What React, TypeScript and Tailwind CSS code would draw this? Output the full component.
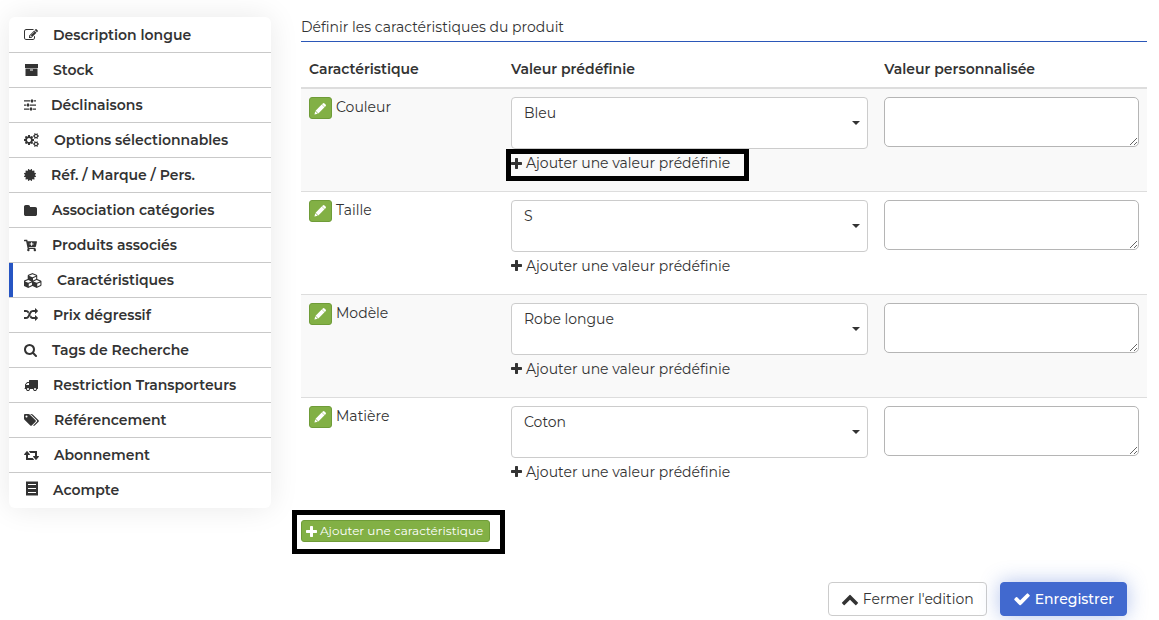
import { useState } from 'react';
import type { ReactNode } from 'react';
import { FaCartPlus, FaCertificate } from 'react-icons/fa';

interface GlyphProps {
  d: string;
  box?: string;
  className?: string;
}

const Glyph = ({ d, box = '0 0 1792 1792', className = 'w-[14px] h-[14px]' }: GlyphProps) => (
  <svg viewBox={box} fill="currentColor" className={`shrink-0 ${className}`} aria-hidden="true">
    <path d={d} />
  </svg>
);

const paths = {
  edit: 'M888 1184l116-116-152-152-116 116v56h96v96h56zm440-720q-16-16-33 1l-350 350q-17 17-1 33t33-1l350-350q17-17 1-33zm80 594v190q0 119-84.5 203.5t-203.5 84.5h-832q-119 0-203.5-84.5t-84.5-203.5v-832q0-119 84.5-203.5t203.5-84.5h832q63 0 117 25 15 7 18 23 3 17-9 29l-49 49q-14 14-32 8-23-6-45-6h-832q-66 0-113 47t-47 113v832q0 66 47 113t113 47h832q66 0 113-47t47-113v-126q0-13 9-22l64-64q15-15 35-7t20 29zm-96-738l288 288-672 672h-288v-288zm444 132l-92 92-288-288 92-92q28-28 68-28t68 28l152 152q28 28 28 68t-28 68z',
  archive: 'M0 0h13v4H0zM.5 4.5h12V12H.5zM5 5.5v1h3v-1z',
  sliders: 'M0 288h832v160H0zM1216 288h320v160h-320zM896 192h256v384H896zM0 816h320v160H0zM704 816h832v160H704zM384 704h256v384H384zM0 1344h704v160H0zM1088 1344h448v160h-448zM768 1216h256v384H768z',
  cogs: 'M896 896q0-106-75-181t-181-75-181 75-75 181 75 181 181 75 181-75 75-181zm768 512q0-52-38-90t-90-38-90 38-38 90q0 53 37.5 90.5t90.5 37.5 90.5-37.5 37.5-90.5zm0-1024q0-52-38-90t-90-38-90 38-38 90q0 53 37.5 90.5t90.5 37.5 90.5-37.5 37.5-90.5zm-384 421v185q0 10-7 19.5t-16 10.5l-155 24q-11 35-32 76 34 48 90 115 7 11 7 20 0 12-7 19-23 30-82.5 89.5t-78.5 59.5q-11 0-21-7l-115-90q-37 19-77 31-11 108-23 155-7 24-30 24h-186q-11 0-20-7.5t-10-17.5l-23-153q-34-10-75-31l-118 89q-7 7-20 7-11 0-21-8-144-133-144-160 0-9 7-19 10-14 41-53t47-61q-23-44-35-82l-152-24q-10-1-17-9.5t-7-19.5v-185q0-10 7-19.5t16-10.5l155-24q11-35 32-76-34-48-90-115-7-11-7-20 0-12 7-20 22-30 82-89t79-59q11 0 21 7l115 90q34-18 77-32 11-108 23-154 7-24 30-24h186q11 0 20 7.5t10 17.5l23 153q34 10 75 31l118-89q8-7 20-7 11 0 21 8 144 133 144 160 0 8-7 19-12 16-42 54t-45 60q23 48 34 82l152 23q10 2 17 10.5t7 19.5zm640 533v140q0 16-149 31-12 27-30 52 51 113 51 138 0 4-4 7-122 71-124 71-8 0-46-47t-52-68q-20 2-30 2t-30-2q-14 21-52 68t-46 47q-2 0-124-71-4-3-4-7 0-25 51-138-18-25-30-52-149-15-149-31v-140q0-16 149-31 13-29 30-52-51-113-51-138 0-4 4-7 4-2 35-20t59-34 30-16q8 0 46 46.5t52 67.5q20-2 30-2t30 2q51-71 92-112l6-2q4 0 124 70 4 3 4 7 0 25-51 138 17 23 30 52 149 15 149 31zm0-1024v140q0 16-149 31-12 27-30 52 51 113 51 138 0 4-4 7-122 71-124 71-8 0-46-47t-52-68q-20 2-30 2t-30-2q-14 21-52 68t-46 47q-2 0-124-71-4-3-4-7 0-25 51-138-18-25-30-52-149-15-149-31v-140q0-16 149-31 13-29 30-52-51-113-51-138 0-4 4-7 4-2 35-20t59-34 30-16q8 0 46 46.5t52 67.5q20-2 30-2t30 2q51-71 92-112l6-2q4 0 124 70 4 3 4 7 0 25-51 138 17 23 30 52 149 15 149 31z',
  folder: 'M1728 608v704q0 92-66 158t-158 66h-1216q-92 0-158-66t-66-158v-960q0-92 66-158t158-66h320q92 0 158 66t66 158v32h672q92 0 158 66t66 158z',
  cubes: 'M512 1632l384-192v-314l-384 164v342zm-64-454l404-173-404-173-404 173zm1088 454l384-192v-314l-384 164v342zm-64-454l404-173-404-173-404 173zm-448-293l384-165v-266l-384 164v267zm-64-379l441-189-441-189-441 189zm1088 518v416q0 36-19 67t-52 47l-448 224q-25 14-57 14t-57-14l-448-224q-5-2-7-4-2 2-7 4l-448 224q-25 14-57 14t-57-14l-448-224q-33-16-52-47t-19-67v-416q0-38 21.5-70t56.5-48l434-186v-400q0-38 21.5-70t56.5-48l448-192q23-10 50-10t50 10l448 192q35 16 56.5 48t21.5 70v400l434 186q36 16 57 48t21 70z',
  random: 'M666 481q-60 92-137 273-22-45-37-72.5t-40.5-63.5-51-56.5-63-35-81.5-14.5h-224q-14 0-23-9t-9-23v-192q0-14 9-23t23-9h224q250 0 410 225zm1126 799q0 14-9 23l-320 320q-9 9-23 9-13 0-22.5-9.5t-9.5-22.5v-192q-32 0-85 .5t-81 1-73-1-71-5-64-10.5-63-18.5-58-28.5-59-40-55-53.5-56-69.5q59-93 136-273 22 45 37 72.5t40.5 63.5 51 56.5 63 35 81.5 14.5h256v-192q0-14 9-23t23-9q12 0 24 10l319 319q9 9 9 23zm0-896q0 14-9 23l-320 320q-9 9-23 9-13 0-22.5-9.5t-9.5-22.5v-192h-256q-48 0-87 15t-69 45-51 61.5-45 77.5q-32 62-78 171-29 66-49.5 111t-54 105-64 100-74 83-90 68.5-106.5 42-128 16.5h-224q-14 0-23-9t-9-23v-192q0-14 9-23t23-9h224q48 0 87-15t69-45 51-61.5 45-77.5q32-62 78-171 29-66 49.5-111t54-105 64-100 74-83 90-68.5 106.5-42 128-16.5h256v-192q0-14 9-23t23-9q12 0 24 10l319 319q9 9 9 23z',
  search: 'M1216 832q0-185-131.5-316.5t-316.5-131.5-316.5 131.5-131.5 316.5 131.5 316.5 316.5 131.5 316.5-131.5 131.5-316.5zm512 832q0 52-38 90t-90 38q-54 0-90-38l-343-342q-179 124-399 124-143 0-273.5-55.5t-225-150-150-225-55.5-273.5 55.5-273.5 150-225 225-150 273.5-55.5 273.5 55.5 225 150 150 225 55.5 273.5q0 220-124 399l343 343q37 37 37 90z',
  truck: 'M640 1408q0-52-38-90t-90-38-90 38-38 90 38 90 90 38 90-38 38-90zm-384-512h384v-256h-158q-13 0-22 9l-195 195q-9 9-9 22v30zm1280 512q0-52-38-90t-90-38-90 38-38 90 38 90 90 38 90-38 38-90zm256-1088v1024q0 15-4 26.5t-13.5 18.5-16.5 11.5-23.5 6-22.5 2-25.5 0-22.5-.5q0 106-75 181t-181 75-181-75-75-181h-384q0 106-75 181t-181 75-181-75-75-181h-64q-3 0-22.5.5t-25.5 0-22.5-2-23.5-6-16.5-11.5-13.5-18.5-4-26.5q0-26 19-45t45-19v-320q0-8-.5-35t0-38 2.5-34.5 6.5-37 14-30.5 22.5-30l198-198q19-19 50.5-32t58.5-13h160v-192q0-26 19-45t45-19h1024q26 0 45 19t19 45z',
  tags: 'M448 448q0-53-37.5-90.5t-90.5-37.5-90.5 37.5-37.5 90.5 37.5 90.5 90.5 37.5 90.5-37.5 37.5-90.5zm1067 576q0 53-37 90l-491 492q-39 37-91 37-53 0-90-37l-715-716q-38-37-64.5-101t-26.5-117v-416q0-52 38-90t90-38h416q53 0 117 26.5t102 64.5l715 714q37 39 37 91zm384 0q0 53-37 90l-491 492q-39 37-91 37-36 0-59-14t-53-45l470-470q37-37 37-90 0-52-37-91l-715-714q-38-38-102-64.5t-117-26.5h224q53 0 117 26.5t102 64.5l715 714q37 39 37 91z',
  retweet: 'M1280 1504q0 13-9.5 22.5t-22.5 9.5h-960q-8 0-13.5-2t-9-7-5.5-8-3-11.5-1-11.5v-600h-192q-26 0-45-19t-19-45q0-24 15-41l320-384q19-22 49-22t49 22l320 384q15 17 15 41 0 26-19 45t-45 19h-192v384h576q16 0 25 11l160 192q7 10 7 21zm640-416q0 24-15 41l-320 384q-20 23-49 23t-49-23l-320-384q-15-17-15-41 0-26 19-45t45-19h192v-384h-576q-16 0-25-12l-160-192q-7-9-7-20 0-13 9.5-22.5t22.5-9.5h960q8 0 13.5 2t9 7 5.5 8 3 11.5 1 11.5v600h192q26 0 45 19t19 45z',
  receipt: 'M2 1l1 1 1-1 1 1 1-1 1 1 1-1 1 1 1-1 1 1 1-1 1 1 1-1v15l-1-1-1 1-1-1-1 1-1-1-1 1-1-1-1 1-1-1-1 1-1-1-1 1zM4 4v1h8v-1zM4 8v1h8v-1zM4 12v1h8v-1z',
  pencil: 'M9.5 1.5q.9-.9 1.8 0l1.2 1.2q.9.9 0 1.8l-.9.9-3-3zM8.3 2.7l3 3-6.6 6.6-3-3zM1.3 9.9l2.8 2.8-3.6.8z',
  plus: 'M1600 736v192q0 40-28 68t-68 28h-416v416q0 40-28 68t-68 28h-192q-40 0-68-28t-28-68v-416h-416q-40 0-68-28t-28-68v-192q0-40 28-68t68-28h416v-416q0-40 28-68t68-28h192q40 0 68 28t28 68v416h416q40 0 68 28t28 68z',
  check: 'M1671 566q0 40-28 68l-724 724-136 136q-28 28-68 28t-68-28l-136-136-362-362q-28-28-28-68t28-68l136-136q28-28 68-28t68 28l294 295 656-657q28-28 68-28t68 28l136 136q28 28 28 68z',
  chevronUp: 'M1683 1331l-166 165q-19 19-45 19t-45-19l-531-531-531 531q-19 19-45 19t-45-19l-166-165q-19-19-19-45.5t19-45.5l742-741q19-19 45-19t45 19l742 741q19 19 19 45.5t-19 45.5z',
};

const menu: { label: string; icon: ReactNode }[] = [
  { label: 'Description longue', icon: <Glyph d={paths.edit} /> },
  { label: 'Stock', icon: <Glyph d={paths.archive} box="-1 0 14 12" className="w-[14px] h-[12px]" /> },
  { label: 'Déclinaisons', icon: <Glyph d={paths.sliders} box="0 0 1536 1792" className="w-[12px] h-[14px]" /> },
  { label: 'Options sélectionnables', icon: <Glyph d={paths.cogs} box="0 0 1920 1792" className="w-[15px] h-[14px]" /> },
  { label: 'Réf. / Marque / Pers.', icon: <FaCertificate className="w-[12px] h-[12px] shrink-0" /> },
  { label: 'Association catégories', icon: <Glyph d={paths.folder} box="64 0 1664 1664" className="w-[13px] h-[13px]" /> },
  { label: 'Produits associés', icon: <FaCartPlus className="w-[13px] h-[13px] shrink-0" /> },
  { label: 'Caractéristiques', icon: <Glyph d={paths.cubes} box="-64 0 2176 1792" className="w-[18px] h-[15px]" /> },
  { label: 'Prix dégressif', icon: <Glyph d={paths.random} /> },
  { label: 'Tags de Recherche', icon: <Glyph d={paths.search} box="64 128 1664 1664" className="w-[13px] h-[13px]" /> },
  { label: 'Restriction Transporteurs', icon: <Glyph d={paths.truck} /> },
  { label: 'Référencement', icon: <Glyph d={paths.tags} box="0 0 1920 1792" className="w-[15px] h-[14px]" /> },
  { label: 'Abonnement', icon: <Glyph d={paths.retweet} box="0 0 1920 1792" className="w-[15px] h-[14px]" /> },
  { label: 'Acompte', icon: <Glyph d={paths.receipt} box="0 0 14 20" className="w-[14px] h-[20px]" /> },
];

const features = [
  { name: 'Couleur', value: 'Bleu', highlighted: true },
  { name: 'Taille', value: 'S', highlighted: false },
  { name: 'Modèle', value: 'Robe longue', highlighted: false },
  { name: 'Matière', value: 'Coton', highlighted: false },
];

const Sidebar = () => {
  const [active, setActive] = useState('Caractéristiques');

  return (
    <nav className="w-[262px] shrink-0 self-start rounded-md bg-white py-px shadow-[0_0_30px_rgba(0,0,0,0.09)]">
      <ul className="divide-y divide-[#c9c9c9]">
        {menu.map(({ label, icon }) => (
          <li key={label}>
            <a
              href="#"
              onClick={() => setActive(label)}
              className={`flex h-[34px] items-center gap-[15px] border-l-4 pl-[11px] font-semibold ${
                active === label ? 'border-[#2655c3]' : 'border-transparent'
              }`}
            >
              {icon}
              {label}
            </a>
          </li>
        ))}
      </ul>
    </nav>
  );
};

const FeatureRow = ({ name, value, highlighted }: (typeof features)[number]) => (
  <tr className="h-[103px] border-t border-[#ddd] align-top odd:bg-[#f9f9f9]">
    <td className="p-2">
      <div className="flex items-start gap-1">
        <button
          type="button"
          aria-label={`Modifier ${name}`}
          className="flex h-[22px] w-[23px] items-center justify-center rounded-[3px] border border-[#6f9c38] bg-[#82b045] text-white"
        >
          <Glyph d={paths.pencil} box="0 0 14 14" className="w-[13px] h-[13px]" />
        </button>
        <span className="leading-5">{name}</span>
      </div>
    </td>
    <td className="p-2">
      <div className="relative">
        <select
          aria-label={`Valeur prédéfinie ${name}`}
          className="block h-[52px] w-full appearance-none rounded border border-[#ccc] bg-white pb-5 pl-3 pr-6"
        >
          <option>{value}</option>
        </select>
        <svg viewBox="0 0 8 4" className="pointer-events-none absolute right-2 top-6 h-1 w-2" aria-hidden="true">
          <path d="M0 0h8L4 4z" fill="#333" />
        </svg>
      </div>
      <a href="#" className="relative inline-flex h-7 items-center gap-1">
        <Glyph d={paths.plus} box="192 128 1408 1408" className="w-[11px] h-[11px]" />
        Ajouter une valeur prédéfinie
        {highlighted && <span className="absolute -left-[5px] -right-[19px] top-0 h-8 border-[5px] border-black" />}
      </a>
    </td>
    <td className="p-2">
      <textarea
        aria-label={`Valeur personnalisée ${name}`}
        className="block h-[50px] w-full rounded-[5px] border border-[#b5b5b5] bg-white"
      />
    </td>
  </tr>
);

export default function App() {
  return (
    <div className="flex gap-[30px] bg-white pl-[9px] pr-3 pt-[17px] font-['Montserrat','Inter',sans-serif] text-[14px] leading-5 text-[#333]">
      <Sidebar />
      <main className="min-w-0 flex-1">
        <h1 className="border-b border-[#2b57b8] pb-1">Définir les caractéristiques du produit</h1>
        <table className="w-full table-fixed border-collapse">
          <thead>
            <tr className="h-[46px] border-b-2 border-[#ddd] text-left">
              <th scope="col" className="w-[202px] px-2 pt-2 font-semibold">Caractéristique</th>
              <th scope="col" className="px-2 pt-2 font-semibold">Valeur prédéfinie</th>
              <th scope="col" className="w-[32%] px-2 pt-2 font-semibold">Valeur personnalisée</th>
            </tr>
          </thead>
          <tbody>
            {features.map((feature) => (
              <FeatureRow key={feature.name} {...feature} />
            ))}
          </tbody>
        </table>

        <div className="relative mt-5 inline-block">
          <button
            type="button"
            className="flex h-[22px] items-center gap-[3px] rounded-[3px] border border-[#6f9c38] bg-[#82b045] pl-1 pr-[6px] text-[12px] text-white"
          >
            <Glyph d={paths.plus} box="192 128 1408 1408" className="w-[11px] h-[11px]" />
            Ajouter une caractéristique
          </button>
          <span className="pointer-events-none absolute -bottom-3 -left-[9px] -right-[15px] -top-[10px] border-[5px] border-black" />
        </div>

        <div className="mt-10 flex justify-end gap-[13px] pb-1 pr-5">
          <button type="button" className="flex h-[34px] items-center gap-1 rounded border border-[#ccc] bg-white px-3">
            <Glyph d={paths.chevronUp} className="w-[18px] h-[18px]" />
            Fermer l'edition
          </button>
          <button
            type="button"
            className="flex h-[34px] items-center gap-1 rounded border border-[#4169cf] bg-[#4169cf] px-3 font-medium text-white shadow-[0_0_20px_rgba(65,105,207,0.4)]"
          >
            <Glyph d={paths.check} className="w-[18px] h-[18px]" />
            Enregistrer
          </button>
        </div>
      </main>
    </div>
  );
}
